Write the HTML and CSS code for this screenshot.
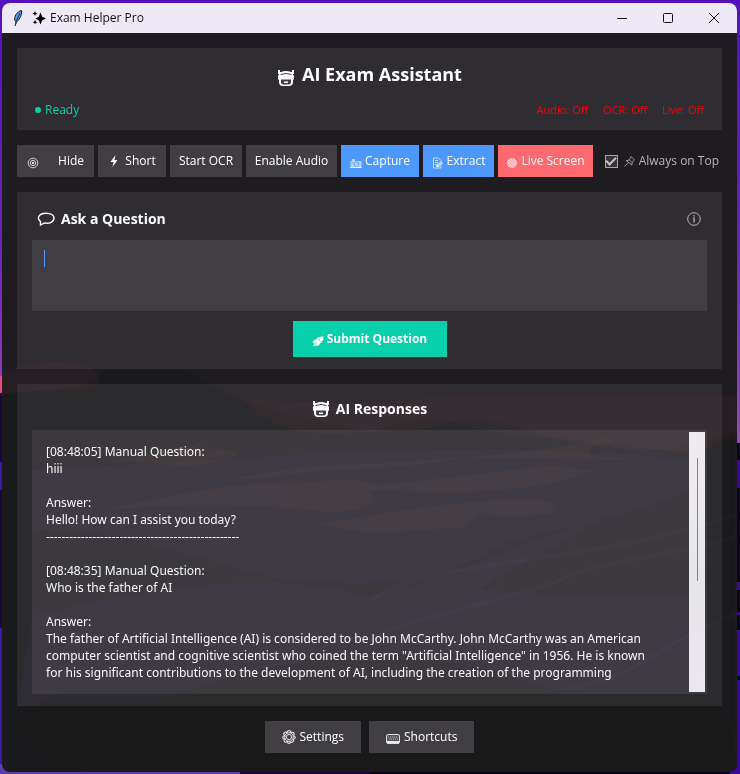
FILE: index.html
```html
<!DOCTYPE html>
<html lang="en">
<head>
<meta charset="utf-8">
<meta name="viewport" content="width=device-width, initial-scale=1">
<title>Exam Helper Pro</title>
<link rel="stylesheet" href="styles.css">
</head>
<body>
<svg class="wallpaper" viewBox="0 0 740 774" preserveAspectRatio="none" aria-hidden="true">
  <defs>
    <linearGradient id="sky" x2="0" y2="1"><stop offset="0" stop-color="#5410bd"/><stop offset=".3" stop-color="#6a22b8"/><stop offset=".57" stop-color="#9a48b4"/></linearGradient>
  </defs>
  <path fill="url(#sky)" d="M0 0h740v774H0z"/>
  <path fill="#e64a80" d="M0 376h8v18H0z"/>
  <path fill="#1c0838" d="M0 393h370v381H0z"/>
  <path fill="#3a18a8" d="M0 462h8v28H0zM0 628h8v146H0z"/>
  <path fill="#09041c" d="M370 443h370v331H370z"/>
  <path fill="#3a08a0" d="M730 460h10v28h-10zM730 582h10v8h-10zM730 612h10v3h-10zM730 630h10v46h-10zM730 680h10v94h-10z"/>
  <path fill="#5a3cb0" d="M0 764h240v10H0z"/>
</svg>
<div class="window">
  <header class="titlebar">
    <svg class="feather" viewBox="0 0 12 18" aria-hidden="true"><path d="M3 12C1.500 8 5 2.500 9.500 1.500c.6 4-1.500 8.500-5 11.500L3 17" fill="#5b9fe8" stroke="#15151c"/><path d="M8 4 3.500 14" stroke="#183050" fill="none"/></svg>
    <svg class="sparkle" viewBox="0 0 14 14" aria-hidden="true"><path fill="#000" d="M8.500 1.500 10.200 5.800l3.800 1.700-3.800 1.700L8.500 13.500 6.800 9.200 3.500 7.500l3.300-1.700zM3 0l.7 1.800L5.500 2.500l-1.800.7L3 5l-.7-1.800L.5 2.500l1.800-.7zM3 9l.7 1.600 1.600.7-1.600.7L3 13.500 2.300 12l-1.600-.7 1.600-.7z"/></svg>
    <span class="app-name">Exam Helper Pro</span>
    <div class="caption-buttons">
      <button type="button" aria-label="Minimize"><svg viewBox="0 0 12 12"><path d="M1 6.500h10"/></svg></button>
      <button type="button" aria-label="Maximize"><svg viewBox="0 0 12 12"><rect x="1.500" y="1.500" width="9" height="9" rx="1"/></svg></button>
      <button type="button" aria-label="Close"><svg viewBox="0 0 12 12"><path d="m1 1 10 10M11 1 1 11"/></svg></button>
    </div>
  </header>

  <svg class="see-through" viewBox="2 33 735 739" preserveAspectRatio="none" aria-hidden="true">
    <path fill="#141810" opacity=".3" d="M2 392c30 0 80-3 94-12l6-10h84c30 22 60 34 100 44l84 18c50-16 70-16 110-2l120 16c60 10 100 0 135-16v342H2z"/>
    <path fill="#ff6040" opacity=".04" d="M2 372c30-10 60-14 85-6 20 10 18 24-20 25-25 2-40-2-65 5zM245 398c8 20 40 34 86 36l99-6c40-14 70-10 110 8l155 18 42-20v-38H440c-60 10-130 8-195 2z"/>
    <path fill="#7050c0" opacity=".05" d="M32 470c80-4 140-8 250-14 150-10 300-8 425 6v20c-60 30-130 44-200 60-60 40-130 50-240 34-80-20-150-50-235-46zM32 616c120-30 230-46 338-20 30-6 60-16 80-24 60-20 100-40 150-52-60 36-90 48-120 70 80 4 160 14 227 0v104H560c-60-30-140-40-230-34-90 6-130 30-190 46H17z"/>
    <path fill="#e07840" opacity=".045" d="M110 462c40-10 70-14 97-20l-14 7c50-2 60 6 8 16-30 2-50-4-91-3zM230 479c50-8 80-15 140-15l125-9c30-3 70-8 105-16 20 0 15 3-8 8-10 8 0 11 60 12-70 2-130-2-192-1-60 12-120 10-170 16-20 5-40 4-60 5zM100 511c80-18 140-30 200-28 60-6 60-2 80 2 80-8 120-14 160-18 20-4 30 4 56 3-36 12-60 18-100 20-60 6-100-2-130 2 20 8 0 20-36 20-70-8-150-10-230-1zM320 524c60-10 140-24 190-24 40-2 50 4 45 11-10 7-50 4-78 4-10 10-12 14-26 13-40 2-80 10-131-4z"/>
    <path fill="none" stroke="#8060d0" stroke-width="4" opacity=".04" d="M370 600c70-45 200-30 367-85M370 640c60-30 150-40 200-65 40-15 80-15 167-38M560 690c80-10 100-50 177-76"/>
    <path fill="#181818" opacity=".3" d="M24 732c-4-20 16-30 42-42h640c20 20 31 60 31 82H90c-30-8-60-20-66-40z"/>
  </svg>

  <main class="content">
    <section class="panel hero">
      <h1><svg class="robot" viewBox="0 0 18 18" aria-hidden="true"><use href="#robot"/></svg>AI Exam Assistant</h1>
      <div class="status">
        <span class="ready"><i></i>Ready</span>
        <span class="off">Audio: Off</span>
        <span class="off">OCR: Off</span>
        <span class="off">Live: Off</span>
      </div>
    </section>

    <div class="toolbar">
      <button type="button" class="btn spread"><svg class="ico low" viewBox="0 0 12 12"><g fill="none" stroke="#ccc"><circle cx="6" cy="6" r="4.800"/><circle cx="6" cy="6" r="2.700"/></g><circle cx="6" cy="6" r="1.200" fill="#ddd"/></svg>Hide</button>
      <button type="button" class="btn wide-gap"><svg class="ico" viewBox="0 0 12 12"><path fill="#fff" d="M7.500 0 2.500 7h3L4.500 12 9.500 5h-3z"/></svg>Short</button>
      <button type="button" class="btn">Start OCR</button>
      <button type="button" class="btn">Enable Audio</button>
      <button type="button" class="btn blue"><svg class="ico low" viewBox="0 0 12 12"><path fill="#b9d6ff" d="M.5 4H2V2h3v2h6.500v7H.5z"/><circle cx="6.500" cy="7.300" r="2.300" fill="#d5e6ff" stroke="#5f9ff5"/><path d="M.5 10.500h11" stroke="#eef5ff"/><path d="M1.500 6h2M5.500 8l2-1.500" stroke="#5f9ff5"/></svg>Capture</button>
      <button type="button" class="btn blue"><svg class="ico low" viewBox="0 0 12 12"><path fill="none" stroke="#c5dcff" d="M6.500 1h-5v10h7.500V9M6.500 1 9 3.500V5M3 3.500h3M3 5.500h3M3 7.500h1"/><path fill="#dfecff" d="m4 10 .5-2.500L9 4.500l2 2L6.500 10z"/><path stroke="#4c98fd" stroke-width=".7" d="m6 8.500 3-2.500"/></svg>Extract</button>
      <button type="button" class="btn red"><svg class="ico low" viewBox="0 0 12 12"><circle cx="6" cy="6" r="5" fill="#ffc8cb"/><path d="m2 4 6 6M3.500 2.500l6 6M6 2l4 4M1.500 6.500 5 10" stroke="#fc8f94" stroke-width=".7"/></svg>Live Screen</button>
      <label class="pin"><input type="checkbox" checked><svg class="ico" viewBox="0 0 12 12"><path fill="none" stroke="#999" d="m7 1.500 3.500 3.500-1 .5L8 8v2L2 5.500h2l2.500-2zM4 8 .5 11.500M5 4.500l3 3"/></svg>Always on Top</label>
    </div>

    <section class="panel ask">
      <div class="ask-head">
        <h2><svg class="bubble" viewBox="0 0 18 14" aria-hidden="true"><path fill="none" stroke="#fff" stroke-width="1.400" d="M3.500 9.600C-.5 6.500 1.500 1.200 9 1.200c5 0 8 2.200 8 4.900 0 3.600-4.600 6-9.500 4.800L3.500 13z"/></svg><label for="question">Ask a Question</label></h2>
        <button type="button" class="info" aria-label="Information"><svg viewBox="0 0 14 14"><circle cx="7" cy="7" r="6.300" fill="none" stroke="#b4b3b6"/><path stroke="#c4c3c6" stroke-width="1.200" d="M7 5.500v5M7 3.200v1.300"/></svg></button>
      </div>
      <div class="entry"><textarea id="question"></textarea><i class="caret"></i></div>
      <button type="button" class="submit"><svg class="ico low" viewBox="0 0 12 12"><path fill="#eafff9" d="M11.500 1.500C8 1 5.500 2 4 4.500L1.500 5.500.5 8l2 .2-1.500 3 3.500-.7 1 .5 2-1.500.5-1C10.500 7 12 4.500 11.500 1.500z"/><path stroke="#5fdcc4" d="m6.500 4.500 2 2M2.500 9.500l2-1.500"/></svg>Submit Question</button>
    </section>

    <section class="panel answers">
      <h2><svg class="robot" viewBox="0 0 18 18" aria-hidden="true"><use href="#robot"/></svg>AI Responses</h2>
      <div class="log-box">
        <div class="log" role="log">[08:48:05] Manual Question:
hiii

Answer:
Hello! How can I assist you today?
--------------------------------------------------

[08:48:35] Manual Question:
Who is the father of AI

Answer:
The father of Artificial Intelligence (AI) is considered to be John McCarthy. John McCarthy was an American
computer scientist and cognitive scientist who coined the term "Artificial Intelligence" in 1956. He is known
for his significant contributions to the development of AI, including the creation of the programming</div>
        <div class="scroll"><i></i></div>
      </div>
    </section>

    <footer class="footer">
      <button type="button" class="btn"><svg class="gear" viewBox="0 0 14 14"><g fill="none" stroke="#dddbe0"><circle cx="7" cy="7" r="2.600"/><circle cx="7" cy="7" r="4.300"/><path stroke-width="1.200" d="M5 2.700Q5 .7 7 .7t2 2Q11.500 1.500 12 3.500T11.300 6q2 0 2 1.500T11.300 9q1 2-.8 3T8.500 11.400Q8.500 13.300 7 13.300T5.500 11.400Q3 13 2.300 11.500T2.700 9Q.7 9 .7 7.500T2.700 6Q1 4 2.300 2.800T5 2.700z"/></g></svg>Settings</button>
      <button type="button" class="btn"><svg class="keys" viewBox="0 0 14 10"><rect x=".5" y=".5" width="13" height="9" rx="1.500" fill="#555" stroke="#ddd"/><path stroke="#bbb" stroke-dasharray="1 1" d="M2 3h10M3 5h9"/><path stroke="#eee" stroke-width="2" d="M1 8h12"/></svg>Shortcuts</button>
    </footer>
  </main>
</div>

<svg class="defs" aria-hidden="true"><defs><g id="robot">
  <path fill="#fff" d="M1 1h2v2h1q5-2 10 0h1V1h2v4h-1v1q1 0 1 1v3q0 1-1 1v2q0 4-4 4H6q-4 0-4-4v-2q-1 0-1-1V7q0-1 1-1V5H1z"/>
  <path fill="none" stroke="#403d42" d="M3.500 5.500q5.500-2 11 0"/><path fill="#403d42" d="M4 10.500h10V13q0 2.500-2 2.500H6q-2 0-2-2.500z"/><path fill="#fff" d="M7 12.500h4V14H7z"/>
</g></defs></svg>
</body>
</html>
```
FILE: styles.css
```css
* { box-sizing: border-box; }

body {
  margin: 0;
  min-height: 100vh;
  padding: 3px 3px 2px 2px;
  display: flex;
  background: #4a10a8;
  color: #fff;
  font: 12px/16px "Open Sans", "Noto Sans", sans-serif;
}

button { font: inherit; color: inherit; border: 0; padding: 0; background: none; }
svg { display: block; flex: none; }
h1, h2 { margin: 0; display: flex; align-items: center; }

.defs { position: absolute; width: 0; height: 0; }
.wallpaper { position: fixed; inset: 0; width: 100%; height: 100%; z-index: -1; }

.window {
  position: relative;
  flex: 1;
  min-width: 0;
  display: flex;
  flex-direction: column;
  border-radius: 8px;
  overflow: hidden;
  background: #1e1c21;
}

.see-through {
  position: absolute;
  top: 30px;
  left: 0;
  width: 100%;
  height: calc(100% - 30px);
  pointer-events: none;
}

.titlebar {
  height: 30px;
  display: flex;
  align-items: center;
  padding-left: 10px;
  background: #eee9f7;
  color: #111;
}
.feather { width: 12px; height: 18px; margin-right: 8px; }
.sparkle { width: 14px; height: 14px; margin-right: 4px; }
.caption-buttons { display: flex; margin-left: auto; }
.caption-buttons button { width: 46px; height: 30px; display: grid; place-items: center; }
.caption-buttons svg { width: 12px; height: 12px; fill: none; stroke: #111; }

.content {
  position: relative;
  flex: 1;
  display: flex;
  flex-direction: column;
  gap: 15px;
  padding: 15px 15px 19px;
}
.panel { background: rgb(255 248 255 / .08); }

.hero { padding: 13px 18px 11px; }
.hero h1 { justify-content: center; gap: 7px; font-size: 18px; line-height: 26px; }
.robot { width: 18px; height: 18px; }
.hero .robot { margin-top: 8px; }
.status { display: flex; gap: 15px; margin-top: 14px; line-height: 18px; }
.ready { display: flex; align-items: center; gap: 4px; margin-right: auto; color: #08d0a5; }
.ready i { width: 6px; height: 6px; border-radius: 50%; background: currentColor; }
.off { color: #ff0008; font-size: 11px; }

.toolbar {
  display: grid;
  grid-template-columns: 77px 68px 72px 91px 78px 71px 95px 1fr;
  gap: 4px;
}
.btn {
  height: 32px;
  display: flex;
  align-items: center;
  justify-content: center;
  gap: 3px;
  background: #403e43;
  white-space: nowrap;
}
.ico { width: 12px; height: 12px; }
.low { margin-top: 4px; }
.spread { justify-content: space-between; padding: 0 10px; }
.wide-gap { gap: 5px; }
.blue { background: #4c98fd; }
.red { background: #fc696f; }
.pin {
  display: flex;
  align-items: center;
  justify-content: flex-end;
  gap: 3px;
  padding-right: 3px;
  color: #b5b4b8;
  white-space: nowrap;
}
.pin input {
  appearance: none;
  width: 13px;
  height: 13px;
  margin: 0 3px 0 0;
  border: 1px solid #a5a4a7;
  display: grid;
  place-items: center;
  background: #38363b;
}
.pin input:checked::before {
  content: "";
  width: 8px;
  height: 4px;
  margin-top: -3px;
  border: solid #c4c3c6;
  border-width: 0 0 2px 2px;
  transform: rotate(-45deg);
}

.ask { padding: 15px 15px 12px; }
.ask-head { display: flex; align-items: center; justify-content: space-between; height: 24px; padding: 0 6px 0 5px; }
h2 { font-size: 14px; line-height: 20px; }
.ask h2 { gap: 6px; }
.bubble { width: 18px; height: 14px; }
.info svg { width: 14px; height: 14px; }
.entry { position: relative; height: 71px; margin: 9px 0 10px; }
.entry textarea {
  display: block;
  width: 100%;
  height: 100%;
  border: 0;
  padding: 10px 12px;
  resize: none;
  outline: 0;
  background: #403e43;
  color: #fff;
  font: inherit;
}
.caret { position: absolute; left: 12px; top: 10px; width: 1px; height: 17px; background: #4c98fd; }
.submit {
  display: flex;
  align-items: center;
  justify-content: center;
  gap: 3px;
  width: 154px;
  height: 36px;
  margin: 0 auto;
  background: #08d0ad;
  font-weight: 700;
}

.answers { flex: 1; display: flex; flex-direction: column; padding: 15px 15px 12px; }
.answers h2 { justify-content: center; gap: 6px; padding-bottom: 11px; }
.log-box { flex: 1; display: flex; padding: 2px; background: rgb(255 248 255 / .08); }
.log { flex: 1; min-width: 0; padding: 11px 12px; overflow: hidden; white-space: pre; font-family: "Noto Sans", sans-serif; line-height: 17px; color: #f8f7f9; }
.scroll { width: 16px; padding-top: 26px; background: linear-gradient(#efecf1, #e6e5e8 60%, #eae7ef); }
.scroll i { display: block; width: 1px; height: 123px; margin: 0 auto; background: #858488; }

.footer { display: flex; justify-content: center; gap: 8px; }
.footer .btn { min-width: 96px; padding: 0 17px; gap: 4px; }
.gear { width: 14px; height: 14px; }
.keys { width: 14px; height: 10px; margin-top: 3px; }
```
